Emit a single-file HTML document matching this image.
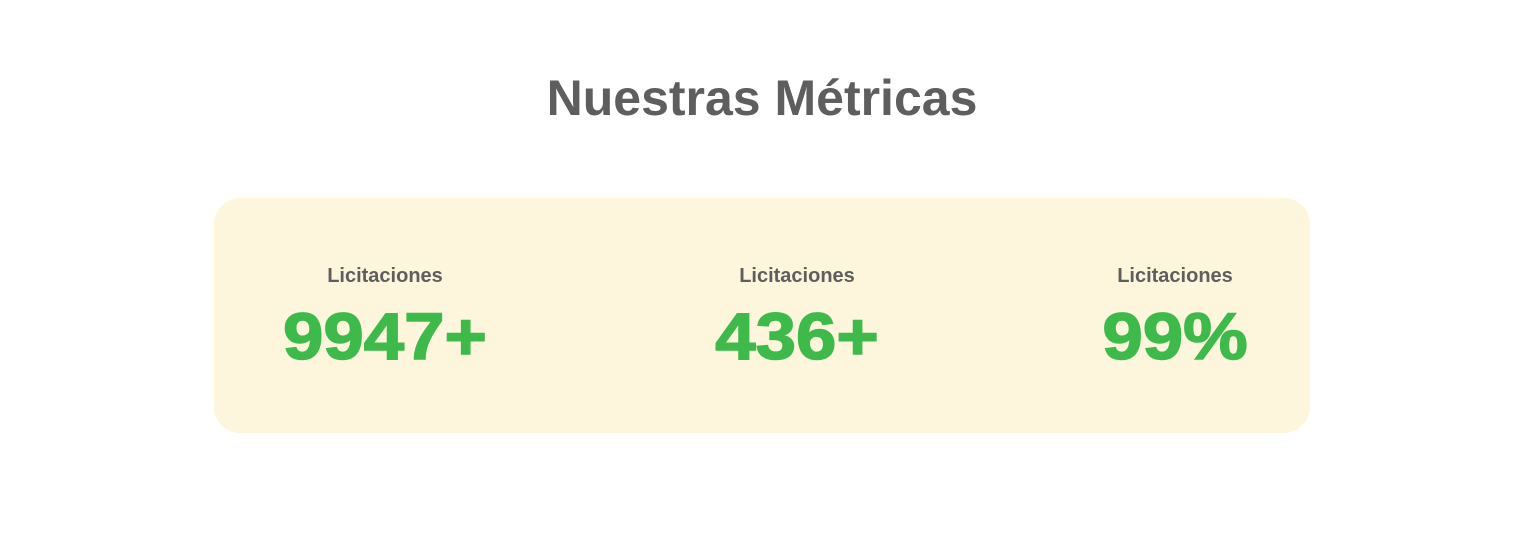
<!DOCTYPE html>
<html><head><meta charset="utf-8"><style>
html,body{margin:0;padding:0;background:#fff;width:1524px;height:535px;overflow:hidden;font-family:"Liberation Sans",sans-serif}
h1{position:absolute;left:0;width:1524px;top:68px;margin:0;text-align:center;font-size:50px;line-height:60px;font-weight:bold;color:#5e5e5e}
.card{position:absolute;left:214px;top:198px;width:1096px;height:235px;background:#fdf6dd;border-radius:26px}
.col{position:absolute;top:66px;text-align:center;transform:translateX(-50%)}
.lab{font-size:20px;font-weight:bold;color:#5e5e5e;line-height:24px}
.num{font-size:66px;font-weight:bold;color:#3dba4a;line-height:76px;margin-top:10px;transform:scaleX(1.1);-webkit-text-stroke:1.5px #3dba4a}
</style></head><body>
<h1>Nuestras Métricas</h1>
<div class="card">
<div class="col" style="left:171px"><div class="lab">Licitaciones</div><div class="num">9947+</div></div>
<div class="col" style="left:583px"><div class="lab">Licitaciones</div><div class="num">436+</div></div>
<div class="col" style="left:961px"><div class="lab">Licitaciones</div><div class="num">99%</div></div>
</div>
</body></html>
